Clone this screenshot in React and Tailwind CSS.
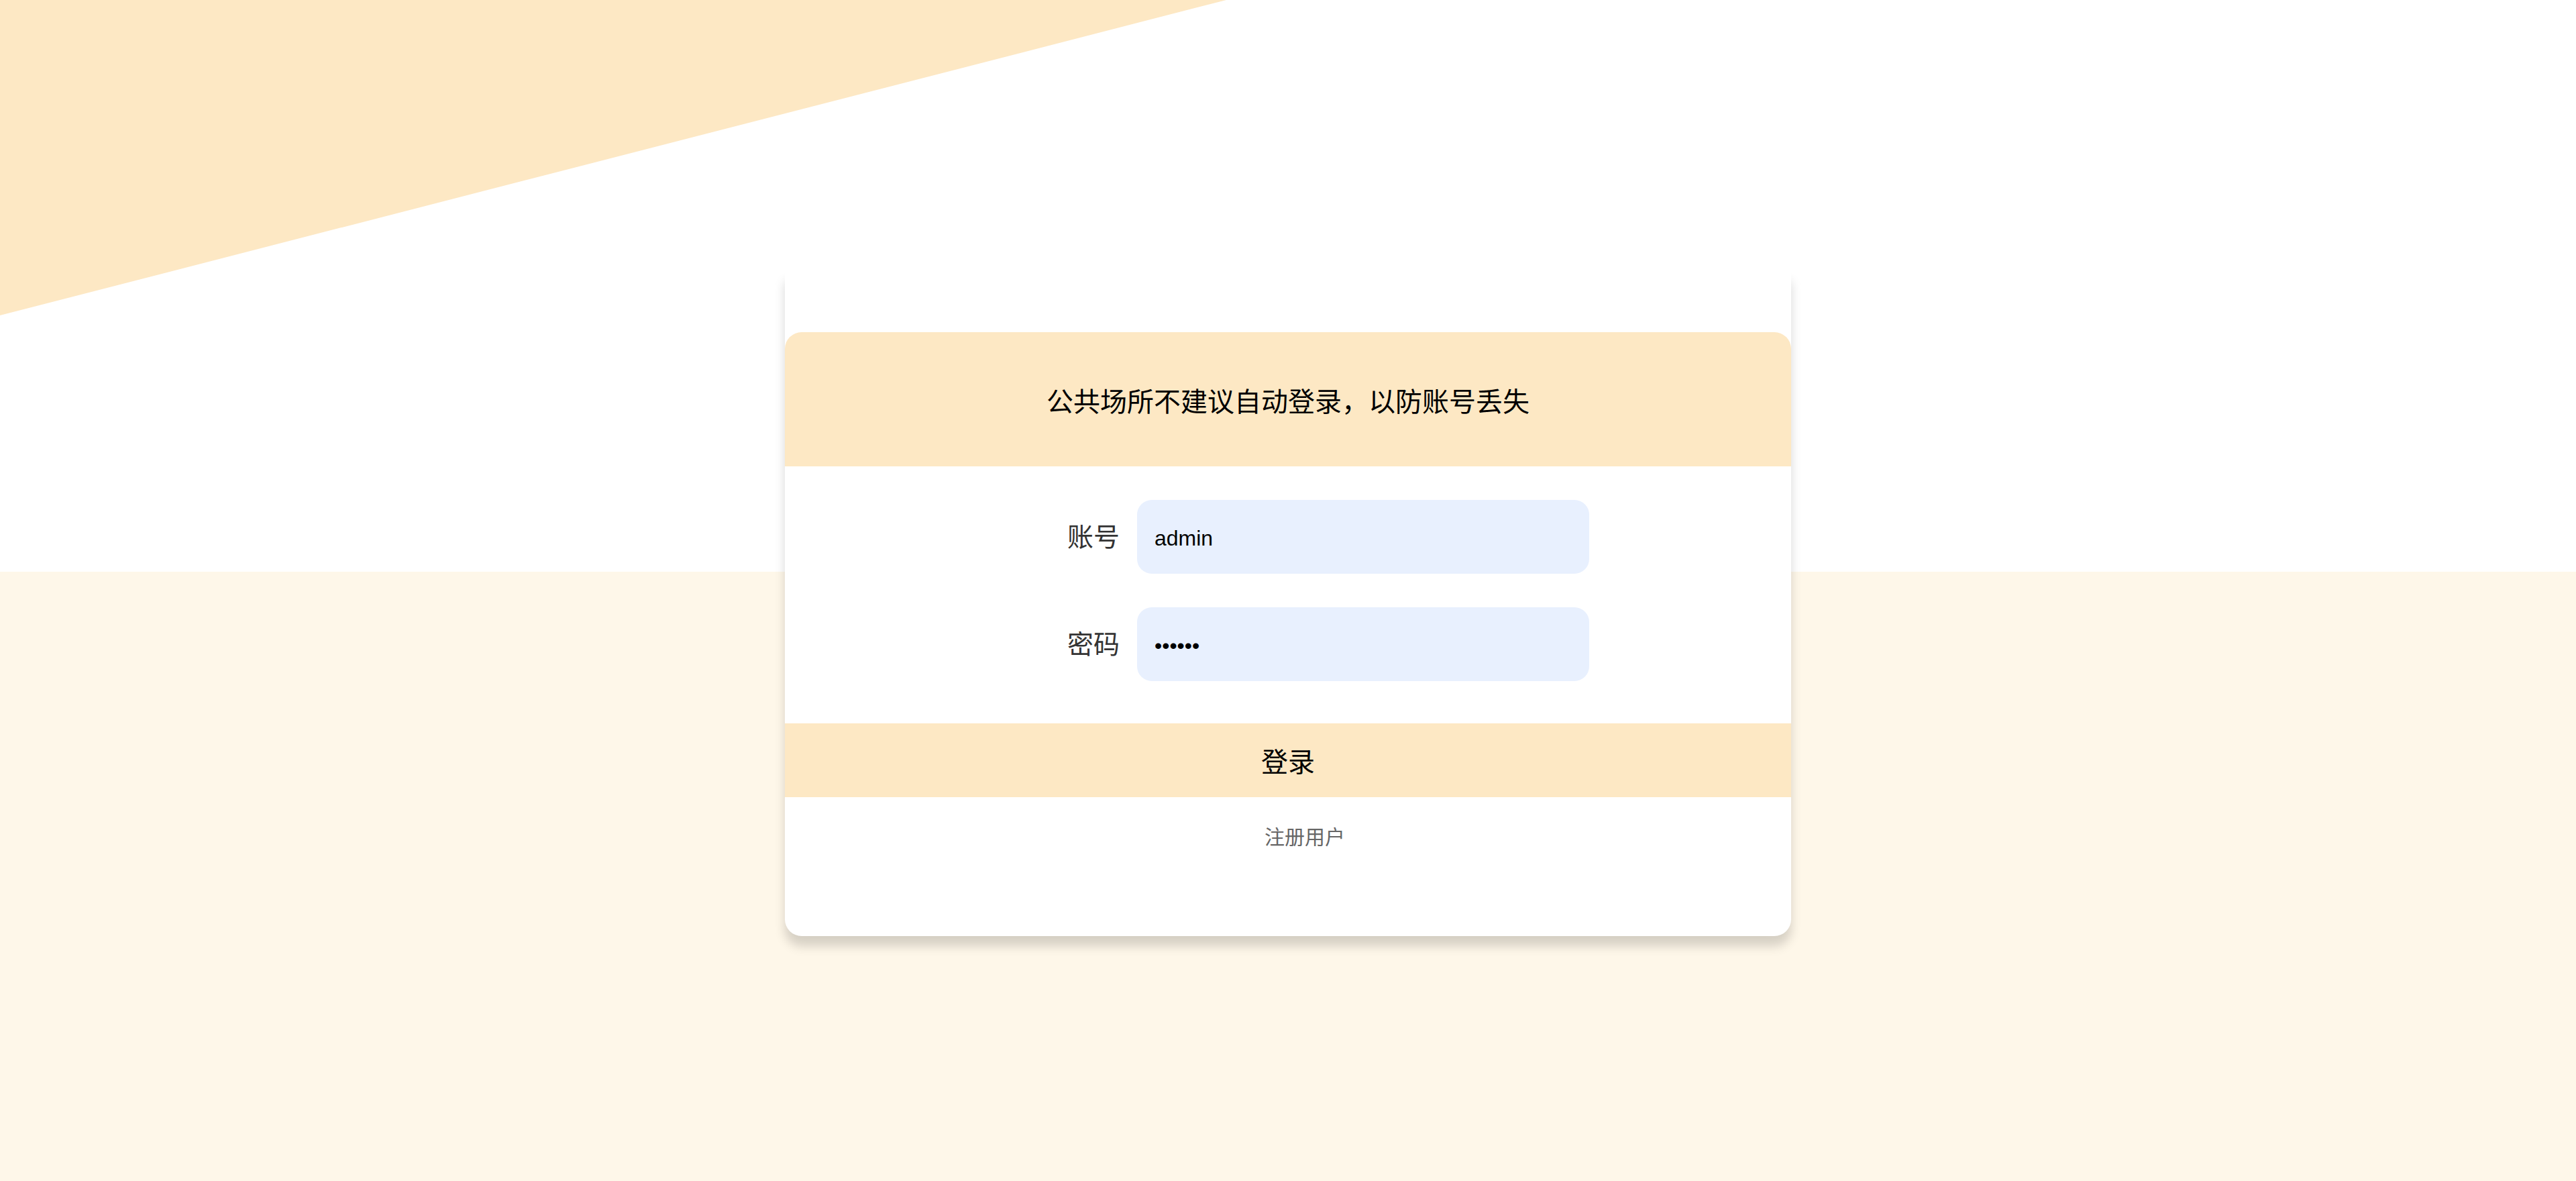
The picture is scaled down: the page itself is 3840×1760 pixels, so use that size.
import React, { useState } from 'react';

const font = "font-['Liberation_Sans','Noto_Sans_CJK_SC',sans-serif]";

const Field = ({ label, type, value, onChange }) => (
    <div className="flex items-center justify-center">
        <label className="w-[224px] text-right text-[39px] leading-none text-[#333333] pr-[26px]">{label}</label>
        <input
            type={type}
            value={value}
            onChange={(e) => onChange(e.target.value)}
            className={`w-[674px] h-[110px] rounded-[22px] bg-[#e8f0fe] px-[26px] pt-[4px] text-[32px] text-black outline-none border-none ${font}`}
        />
    </div>
);

const App = () => {
    const [account, setAccount] = useState('admin');
    const [password, setPassword] = useState('123456');

    return (
        <div className={`relative w-full h-[1760px] overflow-hidden ${font}`}>
            {/* background layer */}
            <div className="absolute inset-0 flex flex-col">
                <div className="h-[852px] bg-white"></div>
                <div className="flex-1 bg-[#fef7e9]"></div>
            </div>
            <svg className="absolute left-0 top-0" width="1830" height="472" viewBox="0 0 1830 472">
                <polygon points="0,0 1828,0 0,470" fill="#fde8c4" />
            </svg>

            {/* login card */}
            <div className="relative pt-[405px] flex justify-center">
                <div className="w-[1500px] bg-white rounded-b-[25px] pt-[90px] pb-[125px] shadow-[0_15px_16px_rgba(0,0,0,0.16)]">
                    <div className="h-[200px] bg-[#fde8c4] rounded-t-[25px] flex items-center justify-center pt-[8px]">
                        <span className="text-[40px] text-black leading-none">公共场所不建议自动登录，以防账号丢失</span>
                    </div>
                    <div className="flex flex-col gap-[50px] pt-[50px]">
                        <Field label="账号" type="text" value={account} onChange={setAccount} />
                        <Field label="密码" type="password" value={password} onChange={setPassword} />
                    </div>
                    <button className="mt-[63px] w-full h-[110px] pt-[6px] bg-[#fde8c4] text-[40px] text-black cursor-pointer">
                        登录
                    </button>
                    <div className="mt-[37px] pl-[50px] text-center text-[30px] leading-[45px] text-[#666666] cursor-pointer">
                        注册用户
                    </div>
                </div>
            </div>
        </div>
    );
};

export default App;
